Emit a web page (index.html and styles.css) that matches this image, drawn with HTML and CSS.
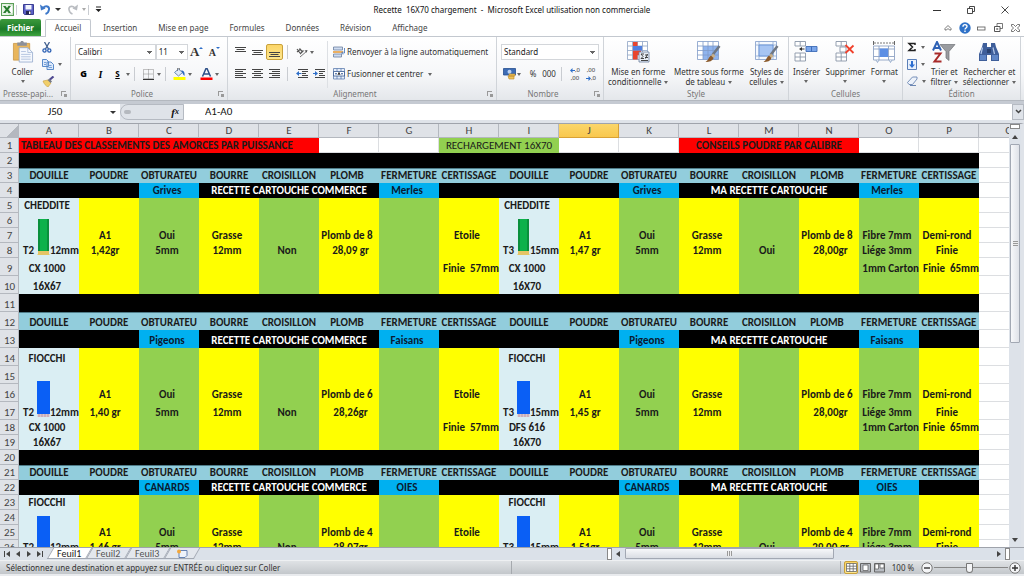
FILE: index.html
```html
<!DOCTYPE html>
<html lang="fr">
<head>
<meta charset="utf-8">
<title>Recette 16X70 chargement - Microsoft Excel</title>
<link rel="stylesheet" href="styles.css">
</head>
<body>
<header class="titlebar">
  <div class="quick">
    <button aria-label="Excel"><svg width="13" height="13" viewBox="0 0 13 13"><rect x=".5" y=".5" width="12" height="12" fill="#e8f3e6" stroke="#5a9e57"/><path d="M8 2h4v9H8z" fill="#fff" stroke="#8fc08c" stroke-width=".6"/><path d="M2 3h2.500L6 5l1.500-2H10L7.300 6.500 10 10H7.500L6 8l-1.500 2H2l2.700-3.500z" fill="#257a2b"/></svg></button>
    <i class="bar"></i>
    <button aria-label="Enregistrer"><svg width="11" height="11" viewBox="0 0 11 11"><path d="M.5.500h10v10h-9l-1-1z" fill="#5a5fc4" stroke="#3c3f94"/><path d="M2.500 1h6v4.500h-6z" fill="#f2f5fc"/><path d="M3 7h5v3.500H3z" fill="#25264f"/><path d="M6 7.500h1.500V10H6z" fill="#fff"/></svg></button>
    <button aria-label="Annuler"><svg width="11" height="11" viewBox="0 0 11 11"><path d="M3 4c3-3 6.500-1.500 6 1.500C8.700 8 7 9.500 5.500 10" fill="none" stroke="#3d78c9" stroke-width="2"/><path d="M0 .5l1 6 4.500-2z" fill="#3d78c9"/></svg><i class="caret dark"></i></button>
    <button aria-label="Rétablir"><svg width="11" height="11" viewBox="0 0 11 11"><path d="M8 4C5 1 1.500 2.500 2 5.500 2.300 8 4 9.500 5.500 10" fill="none" stroke="#b9bcc1" stroke-width="1.600"/><path d="M11 .5l-1 6-4.500-2z" fill="#b9bcc1"/></svg><i class="caret pale"></i></button>
    <i class="bar"></i>
    <button aria-label="Personnaliser"><svg width="7" height="7" viewBox="0 0 7 7"><path d="M1 .5h5v1H1zM.5 3h6l-3 3z" fill="#222"/></svg></button>
  </div>
  <h1>Recette&nbsp; 16X70 chargement&nbsp; -&nbsp; Microsoft Excel utilisation non commerciale</h1>
  <div class="window">
    <button aria-label="Réduire"><svg width="8" height="8" viewBox="0 0 8 8"><path d="M0 4.500h8" stroke="#333"/></svg></button>
    <button aria-label="Restaurer"><svg width="8" height="8" viewBox="0 0 8 8"><path d="M.5 2.500h5v5h-5zM2.500 2.500v-2h5v5h-2" fill="none" stroke="#333" stroke-width=".9"/></svg></button>
    <button aria-label="Fermer"><svg width="8" height="8" viewBox="0 0 8 8"><path d="M.5.500l7 7M7.500.500l-7 7" stroke="#333" stroke-width=".9"/></svg></button>
  </div>
</header>
<nav class="tabs">
  <a class="file" href="#">Fichier</a>
  <a class="active" href="#">Accueil</a>
  <a href="#">Insertion</a>
  <a href="#">Mise en page</a>
  <a href="#">Formules</a>
  <a href="#">Données</a>
  <a href="#">Révision</a>
  <a href="#">Affichage</a>
  <div class="doc">
    <button aria-label="Réduire le ruban"><svg width="8" height="8" viewBox="0 0 8 8"><path d="M4 1.500L7 4.500V6H5.500L4 4.500 2.500 6H1V4.500z" fill="#fff" stroke="#555" stroke-width=".8"/></svg></button>
    <button class="help" aria-label="Aide"><svg width="12" height="12" viewBox="0 0 12 12"><circle cx="6" cy="6" r="5.700" fill="#2f72c8"/><path d="M4 4.700C4 2 8 2 8 4.500 8 6 6 6 6 7.500M6 8.500v1.500" fill="none" stroke="#fff" stroke-width="1.400"/></svg></button>
    <button aria-label="Réduire le classeur"><svg width="9" height="8" viewBox="0 0 9 8"><rect x=".5" y="3" width="7.500" height="3" fill="#fff" stroke="#555" stroke-width=".8"/></svg></button>
    <button aria-label="Restaurer le classeur"><svg width="9" height="9" viewBox="0 0 9 9"><path d="M3 .500h5.500v5H3z" fill="#fff" stroke="#555" stroke-width=".8"/><path d="M.5 3.500H6v5H.5z" fill="#fff" stroke="#555"/><path d="M2.500 5.500h1.500v1H2.500z" fill="none" stroke="#555" stroke-width=".6"/></svg></button>
    <button aria-label="Fermer le classeur"><svg width="9" height="8" viewBox="0 0 9 8"><path d="M.5.500h2l2 2 2-2h2v1.500l-2 2 2 2v1.500h-2l-2-2-2 2h-2V6l2-2-2-2z" fill="#fff" stroke="#555" stroke-width=".8"/></svg></button>
  </div>
</nav>
<section class="ribbon">
  <div class="group">
    <div class="tools">
      <button class="big paste"><svg width="22" height="23" viewBox="0 0 22 23"><path d="M1 2.500h17V20H1z" fill="#e9b65c" stroke="#c28b34" stroke-width=".7"/><path d="M5 1.500h3L9 0h2l1 1.500h3V5H5z" fill="#8d9099"/><path d="M7 7h9l5 5v10H7z" fill="#f5f8fd" stroke="#8ea4c8" stroke-width=".8"/><path d="M16 7v5h5M9 11h5M9 14h10M9 16.500h10M9 19h10" fill="none" stroke="#a3b7d8" stroke-width=".8"/></svg>Coller<i class="caret"></i></button>
      <div class="stack">
        <button aria-label="Couper"><svg width="10" height="11" viewBox="0 0 10 11"><path d="M2.500 0l4 7M7.500 0l-4 7" stroke="#42608f" stroke-width="1.300"/><circle cx="2.500" cy="8.500" r="1.600" fill="none" stroke="#2b5fb3" stroke-width="1.300"/><circle cx="7.300" cy="8.500" r="1.600" fill="none" stroke="#2b5fb3" stroke-width="1.300"/></svg></button>
        <button aria-label="Copier"><svg width="12" height="11" viewBox="0 0 12 11"><path d="M.5.500h4l2 2v5h-6zM5 3h4l2.500 2.500v5H5z" fill="#dce9fb" stroke="#4a7fc4" stroke-width=".9"/><path d="M2 3.500h2M2 5.500h2M6.500 6.500h3M6.500 8.500h3.500" stroke="#5d8fd0" stroke-width=".8"/></svg><i class="caret"></i></button>
        <button aria-label="Reproduire la mise en forme"><svg width="13" height="11" viewBox="0 0 13 11"><path d="M1 5l5-1 3 3-3 4C4 10 2 8 1 5z" fill="#f1cf6a" stroke="#c79e3e" stroke-width=".6"/><path d="M5.500 4l2-1.500 2.500 3L8.500 7z" fill="#777b86"/><path d="M8 3.500L11.500.500" stroke="#4e4890" stroke-width="2.200"/></svg></button>
      </div>
    </div>
    <div class="caption launcher">Presse-papi...<i class="launch"></i></div>
  </div>
  <div class="group">
    <div class="tools rows">
      <div class="row">
        <select class="font" aria-label="Police"><option>Calibri</option></select>
        <select class="size" aria-label="Taille"><option>11</option></select>
        <button class="letter grow" aria-label="Agrandir la police">A<i class="up"></i></button>
        <button class="letter shrink" aria-label="Réduire la police">A<i class="down"></i></button>
      </div>
      <div class="row">
        <button class="t bold">G</button><button class="t ital">I</button><button class="t under">S</button><i class="caret"></i>
        <i class="bar"></i>
        <button class="t" aria-label="Bordures"><svg width="11" height="11" viewBox="0 0 11 11"><path d="M.5.500h10v9H.5zM5.500.500v9M.500 5h10" fill="none" stroke="#888" stroke-dasharray="1 1"/><path d="M0 10.500h11" stroke="#333"/></svg></button><i class="caret"></i>
        <i class="bar"></i>
        <button class="t" aria-label="Remplissage"><svg width="13" height="12" viewBox="0 0 13 12"><path d="M1.500 4.500l4-3.500 4 3.500-4 3.500z" fill="#dfeaf9" stroke="#5e7fae" stroke-width=".9"/><path d="M8 2.500c3 0 4 2 3.500 5.500C10 7 9.500 5 9 4z" fill="#2c69bd"/><path d="M4.500 3V0h2v2" fill="none" stroke="#666" stroke-width=".7"/><path d="M.5 9h12v3H.5z" fill="#ff0"/></svg></button><i class="caret"></i>
        <button class="t last" aria-label="Couleur de police"><svg width="13" height="12" viewBox="0 0 13 12"><path d="M2.500 8.500L6 .500h1l3.500 8M4 6h5" fill="none" stroke="#2c4f87" stroke-width="1.500"/><path d="M.5 9.500h12V12H.5z" fill="#f00"/></svg></button><i class="caret"></i>
      </div>
    </div>
    <div class="caption launcher">Police<i class="launch"></i></div>
  </div>
  <div class="group">
    <div class="tools align">
      <div class="rows">
        <div class="row">
          <button class="t" aria-label="Aligner en haut"><svg width="11" height="12" viewBox="0 0 11 12"><path d="M0 1.500h11M1.500 3.500h8M0 5.500h11" stroke="#444"/></svg></button>
          <button class="t" aria-label="Aligner au centre"><svg width="11" height="12" viewBox="0 0 11 12"><path d="M0 4.500h11M1.500 6.500h8M0 8.500h11" stroke="#444"/></svg></button>
          <button class="t on" aria-label="Aligner en bas"><svg width="11" height="12" viewBox="0 0 11 12"><path d="M0 6.500h11M1.500 8.500h8M0 10.500h11" stroke="#444"/></svg></button>
          <i class="bar"></i>
          <button class="t" aria-label="Orientation"><svg width="12" height="11" viewBox="0 0 12 11"><path d="M1 2l3 4M3.500 1.500l3 3.500M1 5l3-2.500M4 7l3.500-3.500" stroke="#555" stroke-width="1.200"/><path d="M4 10l7-6" stroke="#777"/><path d="M11.500 3l-3 .500 2.200 2.300z" fill="#555"/></svg></button><i class="caret"></i>
        </div>
        <div class="row">
          <button class="t" aria-label="Gauche"><svg width="11" height="10" viewBox="0 0 11 10"><path d="M0 .500h11M0 2.500h8M0 4.500h11M0 6.500h8M0 8.500h11" stroke="#444"/></svg></button>
          <button class="t" aria-label="Centrer"><svg width="11" height="10" viewBox="0 0 11 10"><path d="M0 .500h11M2 2.500h7M0 4.500h11M2 6.500h7M0 8.500h11" stroke="#444"/></svg></button>
          <button class="t" aria-label="Droite"><svg width="11" height="10" viewBox="0 0 11 10"><path d="M0 .500h11M3 2.500h8M0 4.500h11M3 6.500h8M0 8.500h11" stroke="#444"/></svg></button>
          <i class="bar"></i>
          <button class="t" aria-label="Diminuer le retrait"><svg width="12" height="10" viewBox="0 0 12 10"><path d="M2 .500h10M6 2.500h6M6 4.500h4M6 6.500h6M2 8.500h10" stroke="#444"/><path d="M0 4.500L3 2v5z" fill="#2f6fc9"/><path d="M3 4.500h2.500" stroke="#2f6fc9"/></svg></button>
          <button class="t" aria-label="Augmenter le retrait"><svg width="12" height="10" viewBox="0 0 12 10"><path d="M2 .500h10M6 2.500h6M6 4.500h4M6 6.500h6M2 8.500h10" stroke="#444"/><path d="M5 4.500L2 2v5z" fill="#2f6fc9"/><path d="M0 4.500h2.500" stroke="#2f6fc9"/></svg></button>
        </div>
      </div>
      <div class="rows wide">
        <button class="row"><svg width="12" height="12" viewBox="0 0 12 12"><path d="M.5 1h9v3h-9zM.5 8h8v3h-8z" fill="#cfdcf0" stroke="#6a7f9f" stroke-width=".8"/><path d="M0 6h10" stroke="#e6962e" stroke-width="1.500"/><path d="M11.500 2v5H9M10 5.500L8.500 7 10 8.500" fill="none" stroke="#3c6fb8" stroke-width=".8"/></svg>Renvoyer à la ligne automatiquement</button>
        <button class="row"><svg width="12" height="12" viewBox="0 0 12 12"><path d="M.5.500h11v10.500H.5zM4 .500v3M8 .500v3M4 8v3M8 8v3" fill="#e6eefa" stroke="#5f7fb0" stroke-width=".8"/><path d="M.5 3.500h11V8H.5z" fill="#fff" stroke="#35588f" stroke-width=".8"/><path d="M2 5.800h2M8 5.800h2" stroke="#234b8c"/><path d="M5 7l1-2.500L7 7" fill="none" stroke="#111" stroke-width=".9"/></svg>Fusionner et centrer<i class="caret"></i></button>
      </div>
    </div>
    <div class="caption launcher">Alignement<i class="launch"></i></div>
  </div>
  <div class="group">
    <div class="tools rows">
      <div class="row"><select class="format" aria-label="Format de nombre"><option>Standard</option></select></div>
      <div class="row">
        <button class="t" aria-label="Format monétaire"><svg width="13" height="12" viewBox="0 0 13 12"><path d="M.5.500h12v6.500H.5z" fill="#3d6cb5" stroke="#274f8f" stroke-width=".8"/><circle cx="6.500" cy="3.700" r="2" fill="#bcd2f2"/><path d="M6 6h6v2H6zM5 8h6v3H6z" fill="#eec15a" stroke="#b98a28" stroke-width=".6"/></svg></button><i class="caret"></i>
        <button class="t percent">%</button><button class="t">000</button>
        <i class="bar"></i>
        <button class="t dec" aria-label="Ajouter une décimale"><span><svg width="5" height="5" viewBox="0 0 5 5"><path d="M0 2.500L2.500 0v2H5v1H2.500v2z" fill="#2f6fc9"/></svg>,0</span><span>,00</span></button>
        <button class="t dec" aria-label="Réduire les décimales"><span>,00</span><span><svg width="5" height="5" viewBox="0 0 5 5"><path d="M5 2.500L2.500 0v2H0v1h2.500v2z" fill="#2f6fc9"/></svg>,0</span></button>
      </div>
    </div>
    <div class="caption launcher">Nombre<i class="launch"></i></div>
  </div>
  <div class="group">
    <div class="tools spread">
      <button class="big"><svg width="23" height="22" viewBox="0 0 23 22"><path d="M.5.500h20v18H.5zM5.500.500v18M10.500.500v18M15.500.500v18M.500 5h20M.500 9.500h20M.500 14h20" fill="#fff" stroke="#8ea3c4" stroke-width=".8"/><path d="M6 1h4.500v4H6zM6 9.500h8V14H6zM6 14h4.500v4.500H6z" fill="#e8442e"/><path d="M6 5h9v4.500H6z" fill="#4f7fe0"/><path d="M12 11h10v10H12z" fill="#e8edf5" stroke="#6b7f9f" stroke-width=".8"/><path d="M17 13h-3l2 2.500-2 2h3M18 14h3M18 16.500h3M20.500 13l-2 4.500M14 19.500h7" fill="none" stroke="#333" stroke-width=".9"/></svg>Mise en forme<span>conditionnelle<i class="caret"></i></span></button>
      <button class="big"><svg width="24" height="22" viewBox="0 0 24 22"><path d="M.5.500h21v18H.5z" fill="#fff"/><path d="M6 5h15.500v13.500H6z" fill="#8fb4ee"/><path d="M.5.500h21v18H.5zM6 .500v18M11 .500v18M16 .500v18M.500 5h21M.500 9.500h21M.500 14h21" fill="none" stroke="#7f9bc8" stroke-width=".8"/><path d="M22.500 5l-7 9" stroke="#6f7783" stroke-width="2.600"/><path d="M16 12.500l2.500 2.500-2 2-2.500-2z" fill="#c8b089"/><path d="M14 14.500l2.500 2.500c-1 3-4 4-8 4 3-1.500 3-5 5.500-6.500z" fill="#8b5a2b"/></svg>Mettre sous forme<span>de tableau<i class="caret"></i></span></button>
      <button class="big"><svg width="24" height="22" viewBox="0 0 24 22"><path d="M.5.500h21v18H.5z" fill="#f4f8fe" stroke="#7f9bc8" stroke-width=".8"/><path d="M4 .500v18M18 .500v18M.500 4h21M.500 15h21" stroke="#8fa8d0" stroke-width=".8"/><path d="M4 4h14v11H4z" fill="#a7c5f3" stroke="#5e8ad0" stroke-width=".8"/><path d="M22.500 5l-7 9" stroke="#6f7783" stroke-width="2.600"/><path d="M16 12.500l2.500 2.500-2 2-2.500-2z" fill="#c8b089"/><path d="M14 14.500l2.500 2.500c-1 3-4 4-8 4 3-1.500 3-5 5.500-6.500z" fill="#8b5a2b"/></svg>Styles de<span>cellules<i class="caret"></i></span></button>
    </div>
    <div class="caption">Style</div>
  </div>
  <div class="group">
    <div class="tools spread">
      <button class="big"><svg width="24" height="22" viewBox="0 0 24 22"><path d="M1 .500h10.500V5H1zM1 12h10.500v8H1zM6.200.500V5M6.200 12v8M1 16h10.500" fill="#fff" stroke="#8a96a8" stroke-width=".9"/><path d="M12 5.500h11v5H12z" fill="#7ba6ea" stroke="#3e6cb8" stroke-width=".9"/><path d="M17.500 5.500v5" stroke="#3e6cb8"/><path d="M6.500 8h4" stroke="#333"/><path d="M5 8l3-2v4z" fill="#333"/></svg>Insérer<i class="caret"></i></button>
      <button class="big"><svg width="20" height="22" viewBox="0 0 20 22"><path d="M1 .500h10.500V5H1zM1 12h10.500v8H1zM6.200.500V5M6.200 12v8M1 16h10.500M5 6h6v5H5z" fill="#fff" stroke="#8a96a8" stroke-width=".9"/><path d="M10.500 4l8 8M18.500 4.500l-8 7.500" stroke="#f0412c" stroke-width="1.800"/></svg>Supprimer<i class="caret"></i></button>
      <button class="big"><svg width="24" height="22" viewBox="0 0 24 22"><path d="M2 2h20" stroke="#555" stroke-width=".8" stroke-dasharray="2 1"/><path d="M1.500 0v4M22.500 0v4" stroke="#555" stroke-width=".9"/><path d="M1.500 5h21v14H1.500zM7 5v14M16.500 5v14M1.500 8h21M1.500 15.500h21" fill="#fff" stroke="#8ea3c4" stroke-width=".9"/><path d="M7.500 7.500h8.500v8.500H7.500z" fill="#5d8fe4"/><path d="M4 19l1.500 2.500L7 19M17 19l1.500 2.500L20 19" fill="#dde5f2" stroke="#8ea3c4" stroke-width=".8"/></svg>Format<i class="caret"></i></button>
    </div>
    <div class="caption">Cellules</div>
  </div>
  <div class="group">
    <div class="tools spread">
      <div class="stack">
        <button aria-label="Somme"><svg width="10" height="10" viewBox="0 0 10 10"><path d="M8 3V1.500H2L5.500 5 2 8.500h6V7" fill="none" stroke="#222" stroke-width="1.500"/></svg><i class="caret"></i></button>
        <button aria-label="Remplissage"><svg width="10" height="11" viewBox="0 0 10 11"><path d="M.5.500h9v10h-9z" fill="#e9f1fc" stroke="#5a7fb8"/><path d="M4 2h2v3.500h2L5 9 2 5.500h2z" fill="#2d6fd2"/></svg><i class="caret"></i></button>
        <button aria-label="Effacer"><svg width="11" height="10" viewBox="0 0 11 10"><path d="M.5 6.500L5.500 1h4.500v2L5.500 8.500H2z" fill="#edf2fa" stroke="#6b87b3" stroke-width=".9"/><path d="M3 9.500h6" stroke="#6b87b3"/></svg><i class="caret"></i></button>
      </div>
      <button class="big"><svg width="24" height="22" viewBox="0 0 24 22"><path d="M1 9.500L5 1l4 8.500M2.500 7h5" fill="none" stroke="#2f62b5" stroke-width="2"/><path d="M2.500 12.500h6l-6 8h7" fill="none" stroke="#a82a2a" stroke-width="2"/><path d="M8 3.500h15l-6 7v9l-3-2.500v-6.500z" fill="#9a9ca0" stroke="#6f7175" stroke-width=".7"/></svg>Trier et<span>filtrer<i class="caret"></i></span></button>
      <button class="big"><svg width="22" height="22" viewBox="0 0 22 22"><path d="M5 2h4v4h4V2h4l1 4 3 7v7h-8v-6H9v6H1v-7l3-7z" fill="#3f5f9a"/><path d="M2 14h6v5H2zM14 14h6v5h-6z" fill="#5f86c6"/><path d="M4.500 6.500L3 13M15 6.500l1.500 6.500" stroke="#b3c8ea" stroke-width="1.200"/><path d="M9 8h4v4H9z" fill="#2a4270"/></svg>Rechercher et<span>sélectionner<i class="caret"></i></span></button>
    </div>
    <div class="caption">Édition</div>
  </div>
</section>
<section class="formula">
  <label class="name"><input value="J50" aria-label="Zone Nom"><i class="caret dark"></i></label>
  <div class="fx"><i class="knob"></i><button>f<sub>x</sub></button></div>
  <input class="content" value="A1-A0" aria-label="Barre de formule">
  <button class="expand" aria-label="Développer"><svg width="7" height="6" viewBox="0 0 7 6"><path d="M1 1l2.500 2.500L6 1" fill="none" stroke="#444" stroke-width="1.500"/></svg></button>
</section>
<main>
  <div class="sheet">
  <table>
    <colgroup><col class="num"><col span="17"></colgroup>
    <thead><tr><th class="corner"></th><th>A</th><th>B</th><th>C</th><th>D</th><th>E</th><th>F</th><th>G</th><th>H</th><th>I</th><th class="sel">J</th><th>K</th><th>L</th><th>M</th><th>N</th><th>O</th><th>P</th><th>Q</th></tr></thead>
    <tbody>
    <tr><th>1</th><td colspan="5" class="red left">TABLEAU DES CLASSEMENTS DES AMORCES PAR PUISSANCE</td><td></td><td></td><td colspan="2" class="lime">RECHARGEMENT 16X70</td><td></td><td></td><td colspan="3" class="red">CONSEILS POUDRE PAR CALIBRE</td><td></td><td></td><td></td></tr>
    <tr class="void"><th>2</th><td colspan="16"></td><td></td></tr>
    <tr class="head"><th>3</th><td>DOUILLE</td><td>POUDRE</td><td>OBTURATEU</td><td>BOURRE</td><td>CROISILLON</td><td>PLOMB</td><td>FERMETURE</td><td>CERTISSAGE</td><td>DOUILLE</td><td>POUDRE</td><td>OBTURATEU</td><td>BOURRE</td><td>CROISILLON</td><td>PLOMB</td><td>FERMETURE</td><td>CERTISSAGE</td><td></td></tr>
    <tr class="void"><th>4</th><td colspan="2"></td><td class="game">Grives</td><td colspan="3">RECETTE CARTOUCHE COMMERCE</td><td class="game">Merles</td><td colspan="3"></td><td class="game">Grives</td><td colspan="3">MA RECETTE CARTOUCHE</td><td class="game">Merles</td><td></td><td></td></tr>
    <tr class="data"><th>5</th><td>CHEDDITE</td><td></td><td></td><td></td><td></td><td></td><td></td><td></td><td>CHEDDITE</td><td></td><td></td><td></td><td></td><td></td><td></td><td></td><td></td></tr>
    <tr class="data"><th>6</th><td></td><td></td><td></td><td></td><td></td><td></td><td></td><td></td><td></td><td></td><td></td><td></td><td></td><td></td><td></td><td></td><td></td></tr>
    <tr class="data"><th>7</th><td></td><td>A1</td><td>Oui</td><td>Grasse</td><td></td><td>Plomb de 8</td><td></td><td>Etoile</td><td></td><td>A1</td><td>Oui</td><td>Grasse</td><td></td><td>Plomb de 8</td><td>Fibre 7mm</td><td>Demi-rond</td><td></td></tr>
    <tr class="data"><th>8</th><td class="case"><div><span>T2</span><svg class="shell" viewBox="0 0 13 38"><rect x="1" y="1" width="11" height="33" fill="#0db14b"/><path d="M1 1h2v33H1zM10 1h2v33h-2z" fill="#0a8f3c"/><path d="M1 33h11v3l1 1H0l1-1z" fill="#e5c566"/></svg><span>12mm</span></div></td><td>1,42gr</td><td>5mm</td><td>12mm</td><td>Non</td><td class="weight">28,09 gr</td><td></td><td></td><td class="case"><div><span>T3</span><svg class="shell" viewBox="0 0 13 38"><rect x="1" y="1" width="11" height="33" fill="#0db14b"/><path d="M1 1h2v33H1zM10 1h2v33h-2z" fill="#0a8f3c"/><path d="M1 33h11v3l1 1H0l1-1z" fill="#e5c566"/></svg><span>15mm</span></div></td><td>1,47 gr</td><td>5mm</td><td>12mm</td><td>Oui</td><td class="weight">28,00gr</td><td>Liége 3mm</td><td>Finie</td><td></td></tr>
    <tr class="data tall"><th>9</th><td>CX 1000</td><td></td><td></td><td></td><td></td><td></td><td></td><td class="right">Finie&nbsp; 57mm</td><td>CX 1000</td><td></td><td></td><td></td><td></td><td></td><td class="right">1mm Carton</td><td class="right">Finie&nbsp; 65mm</td><td></td></tr>
    <tr class="data tall"><th>10</th><td>16X67</td><td></td><td></td><td></td><td></td><td></td><td></td><td></td><td>16X70</td><td></td><td></td><td></td><td></td><td></td><td></td><td></td><td></td></tr>
    <tr class="void tall"><th>11</th><td colspan="16"></td><td></td></tr>
    <tr class="head tall"><th>12</th><td>DOUILLE</td><td>POUDRE</td><td>OBTURATEU</td><td>BOURRE</td><td>CROISILLON</td><td>PLOMB</td><td>FERMETURE</td><td>CERTISSAGE</td><td>DOUILLE</td><td>POUDRE</td><td>OBTURATEU</td><td>BOURRE</td><td>CROISILLON</td><td>PLOMB</td><td>FERMETURE</td><td>CERTISSAGE</td><td></td></tr>
    <tr class="void tall"><th>13</th><td colspan="2"></td><td class="game">Pigeons</td><td colspan="3">RECETTE CARTOUCHE COMMERCE</td><td class="game">Faisans</td><td colspan="3"></td><td class="game">Pigeons</td><td colspan="3">MA RECETTE CARTOUCHE</td><td class="game">Faisans</td><td></td><td></td></tr>
    <tr class="data tall"><th>14</th><td>FIOCCHI</td><td></td><td></td><td></td><td></td><td></td><td></td><td></td><td>FIOCCHI</td><td></td><td></td><td></td><td></td><td></td><td></td><td></td><td></td></tr>
    <tr class="data tall"><th>15</th><td></td><td></td><td></td><td></td><td></td><td></td><td></td><td></td><td></td><td></td><td></td><td></td><td></td><td></td><td></td><td></td><td></td></tr>
    <tr class="data tall"><th>16</th><td></td><td>A1</td><td>Oui</td><td>Grasse</td><td></td><td>Plomb de 6</td><td></td><td>Etoile</td><td></td><td>A1</td><td>Oui</td><td>Grasse</td><td></td><td>Plomb de 6</td><td>Fibre 7mm</td><td>Demi-rond</td><td></td></tr>
    <tr class="data tall"><th>17</th><td class="case"><div><span>T2</span><svg class="shell" viewBox="0 0 13 38"><path d="M0 1h13v33H0z" fill="#0a5ff5"/><path d="M.5 34h12v3H.5z" fill="#dcc6cf"/><path d="M2 34v3M5 34v3M8 34v3M11 34v3" stroke="#b08d98" stroke-width=".7"/></svg><span>12mm</span></div></td><td>1,40 gr</td><td>5mm</td><td>12mm</td><td>Non</td><td class="weight">28,26gr</td><td></td><td></td><td class="case"><div><span>T3</span><svg class="shell" viewBox="0 0 13 38"><path d="M0 1h13v33H0z" fill="#0a5ff5"/><path d="M.5 34h12v3H.5z" fill="#dcc6cf"/><path d="M2 34v3M5 34v3M8 34v3M11 34v3" stroke="#b08d98" stroke-width=".7"/></svg><span>15mm</span></div></td><td>1,45 gr</td><td>5mm</td><td>12mm</td><td></td><td class="weight">28,00gr</td><td>Liége 3mm</td><td>Finie</td><td></td></tr>
    <tr class="data"><th>18</th><td>CX 1000</td><td></td><td></td><td></td><td></td><td></td><td></td><td class="right">Finie&nbsp; 57mm</td><td>DFS 616</td><td></td><td></td><td></td><td></td><td></td><td class="right">1mm Carton</td><td class="right">Finie&nbsp; 65mm</td><td></td></tr>
    <tr class="data"><th>19</th><td>16X67</td><td></td><td></td><td></td><td></td><td></td><td></td><td></td><td>16X70</td><td></td><td></td><td></td><td></td><td></td><td></td><td></td><td></td></tr>
    <tr class="void"><th>20</th><td colspan="16"></td><td></td></tr>
    <tr class="head"><th>21</th><td>DOUILLE</td><td>POUDRE</td><td>OBTURATEU</td><td>BOURRE</td><td>CROISILLON</td><td>PLOMB</td><td>FERMETURE</td><td>CERTISSAGE</td><td>DOUILLE</td><td>POUDRE</td><td>OBTURATEU</td><td>BOURRE</td><td>CROISILLON</td><td>PLOMB</td><td>FERMETURE</td><td>CERTISSAGE</td><td></td></tr>
    <tr class="void"><th>22</th><td colspan="2"></td><td class="game">CANARDS</td><td colspan="3">RECETTE CARTOUCHE COMMERCE</td><td class="game">OIES</td><td colspan="3"></td><td class="game">CANARDS</td><td colspan="3">MA RECETTE CARTOUCHE</td><td class="game">OIES</td><td></td><td></td></tr>
    <tr class="data"><th>23</th><td>FIOCCHI</td><td></td><td></td><td></td><td></td><td></td><td></td><td></td><td>FIOCCHI</td><td></td><td></td><td></td><td></td><td></td><td></td><td></td><td></td></tr>
    <tr class="data"><th>24</th><td></td><td></td><td></td><td></td><td></td><td></td><td></td><td></td><td></td><td></td><td></td><td></td><td></td><td></td><td></td><td></td><td></td></tr>
    <tr class="data"><th>25</th><td></td><td>A1</td><td>Oui</td><td>Grasse</td><td></td><td>Plomb de 4</td><td></td><td>Etoile</td><td></td><td>A1</td><td>Oui</td><td>Grasse</td><td></td><td>Plomb de 4</td><td>Fibre 7mm</td><td>Demi-rond</td><td></td></tr>
    <tr class="data"><th>26</th><td class="case"><div><span>T2</span><svg class="shell" viewBox="0 0 13 38"><path d="M0 1h13v33H0z" fill="#0a5ff5"/><path d="M.5 34h12v3H.5z" fill="#dcc6cf"/></svg><span>12mm</span></div></td><td>1,46 gr</td><td>5mm</td><td>12mm</td><td>Non</td><td class="weight">28,07gr</td><td></td><td></td><td class="case"><div><span>T3</span><svg class="shell" viewBox="0 0 13 38"><path d="M0 1h13v33H0z" fill="#0a5ff5"/><path d="M.5 34h12v3H.5z" fill="#dcc6cf"/></svg><span>15mm</span></div></td><td>1,51gr</td><td>5mm</td><td>12mm</td><td>Oui</td><td class="weight">29,00 gr</td><td>Liége 3mm</td><td>Finie</td><td></td></tr>
    </tbody>
  </table>
  </div>
  <div class="vscroll">
    <i class="split"></i>
    <button aria-label="Défiler vers le haut"><i class="arrow-up"></i></button>
    <div class="thumb"><i class="grip"></i></div>
    <div class="track"></div>
    <button aria-label="Défiler vers le bas"><i class="arrow-down"></i></button>
  </div>
</main>
<footer class="sheets">
  <div class="list">
    <div class="arrows">
      <button aria-label="Première feuille"><svg width="8" height="8" viewBox="0 0 8 8"><path d="M1 1h1v6H1zM7 1v6L3 4z"/></svg></button>
      <button aria-label="Feuille précédente"><svg width="8" height="8" viewBox="0 0 8 8"><path d="M6 1v6L2 4z"/></svg></button>
      <button aria-label="Feuille suivante"><svg width="8" height="8" viewBox="0 0 8 8"><path d="M2 1v6l4-3z"/></svg></button>
      <button aria-label="Dernière feuille"><svg width="8" height="8" viewBox="0 0 8 8"><path d="M6 1h1v6H6zM1 1v6l4-3z"/></svg></button>
    </div>
    <button class="tab current"><span>Feuil1</span></button><button class="tab"><span>Feuil2</span></button><button class="tab"><span>Feuil3</span></button><button class="tab new" aria-label="Insérer une feuille"><span><svg width="12" height="9" viewBox="0 0 12 9"><path d="M3 1.500h8v5l-2 2H3z" fill="#eef3fb" stroke="#5877ab" stroke-width=".9"/><circle cx="3" cy="2.500" r="2" fill="#f3a73b"/></svg></span></button>
  </div>
  <i class="split"></i>
  <div class="hscroll">
    <button aria-label="Défiler à gauche"><i class="arrow-left"></i></button>
    <div class="thumb"><i class="grip"></i></div>
    <div class="track"></div>
    <button aria-label="Défiler à droite"><i class="arrow-right"></i></button>
  </div>
  <i class="split last"></i>
</footer>
<footer class="status">
  <span class="message">Sélectionnez une destination et appuyez sur ENTRÉE ou cliquez sur Coller</span>
  <div class="middle"></div>
  <div class="view">
    <button class="on" aria-label="Normal"><svg width="11" height="10" viewBox="0 0 11 10"><path d="M.5.500h10v8H.5zM3.800.500v8M7.200.500v8M.500 3.200h10M.500 5.800h10" fill="#fff" stroke="#666" stroke-width=".8"/></svg></button>
    <button aria-label="Mise en page"><svg width="11" height="10" viewBox="0 0 11 10"><path d="M.5.500h10v8.500H.5z" fill="#b8bcc2" stroke="#666"/><path d="M3 2h5v5.500H3z" fill="#fff" stroke="#666" stroke-width=".8"/></svg></button>
    <button aria-label="Aperçu des sauts de page"><svg width="11" height="10" viewBox="0 0 11 10"><path d="M.5.500h10v8.500H.5z" fill="#b8bcc2" stroke="#666"/><path d="M1 1h3.500v5H1zM6 1h4v4H6z" fill="#fff" stroke="#666" stroke-width=".8"/></svg></button>
    <output>100 %</output>
    <button class="round" aria-label="Zoom arrière"><svg width="12" height="12" viewBox="0 0 12 12"><circle cx="6" cy="6" r="5.200" fill="#f4f5f7" stroke="#777"/><path d="M3 6h6" stroke="#333" stroke-width="1.400"/></svg></button>
    <input type="range" min="0" max="100" value="48" aria-label="Zoom">
    <button class="round" aria-label="Zoom avant"><svg width="12" height="12" viewBox="0 0 12 12"><circle cx="6" cy="6" r="5.200" fill="#f4f5f7" stroke="#777"/><path d="M3 6h6M6 3v6" stroke="#333" stroke-width="1.400"/></svg></button>
  </div>
</footer>
</body>
</html>
```
FILE: styles.css
```css
* { box-sizing: border-box; }
html, body { height: 100%; margin: 0; }
body {
  display: flex;
  flex-direction: column;
  overflow: hidden;
  background: #fff;
  color: #333;
  font: 8px/10px "Noto Sans", "Open Sans", sans-serif;
}
button, input, select { font: inherit; color: inherit; border: 0; margin: 0; padding: 0; background: none; border-radius: 0; outline: 0; }
button { display: flex; align-items: center; justify-content: center; white-space: nowrap; }
svg { display: block; flex: none; }
i { display: block; flex: none; }
a { color: inherit; text-decoration: none; }

.caret { width: 0; height: 0; border: 2px solid transparent; border-top: 3px solid #666; border-bottom: 0; }
.caret.dark { border-width: 3px; border-bottom: 0; border-top-color: #333; }
.caret.pale { border-top-color: #aaa; }
.bar { width: 1px; height: 10px; background: #c9ccd1; }

/* Title bar and tabs */
.titlebar { display: grid; grid-template-columns: 1fr auto 1fr; align-items: center; height: 19px; flex: none; }
.titlebar h1 { margin: 0; font-size: 8px; font-weight: 400; color: #111; }
.quick { display: flex; align-items: center; gap: 6px; padding-left: 1px; }
.quick .bar { margin-left: -4px; }
.quick button { gap: 4px; }
.window { display: flex; justify-content: flex-end; padding-right: 2px; }
.window button { width: 34px; height: 16px; }
.tabs { display: flex; flex: none; height: 18px; border-bottom: 1px solid #c3c8cf; line-height: 17px; color: #444; }
.tabs a { padding: 0 11px 0 10px; margin-bottom: -1px; }
.tabs .file { background: linear-gradient(#3d9a3d, #1b7a27 60%, #3ea33f); color: #fff; font-weight: 700; padding: 0 7px; margin: 0 4px 0 0; border-radius: 2px 2px 0 0; }
.tabs .active { background: #fff; border: 1px solid #c3c8cf; border-bottom: 0; border-radius: 2px 2px 0 0; padding: 0 9px; line-height: 16px; margin-right: 2px; }
.doc { display: flex; margin-left: auto; align-items: center; }
.doc button { width: 17px; height: 16px; }

/* Ribbon */
.ribbon { display: grid; grid-template-columns: 71fr 157fr 269fr 107fr 185fr 114fr 118fr; flex: none; height: 64px; padding-right: 3px; background: linear-gradient(#fff, #f6f7f9 60%, #e4e7eb); border-bottom: 1px solid #b3b8bf; }
.group { display: flex; flex-direction: column; border-right: 1px solid #d0d4d9; min-width: 0; }
.tools { flex: 1; display: flex; padding: 4px 4px 0; min-height: 0; }
.caption { position: relative; height: 12px; color: #777; line-height: 12px; text-align: center; }
.launcher { padding-right: 14px; }
.launch { position: absolute; right: 4px; top: 3px; width: 5px; height: 5px; border: 1px solid #999; border-right: 0; border-bottom: 0; }
.launch::after { content: ""; position: absolute; left: 2px; top: 2px; width: 3px; height: 3px; background: #999; }
.big { flex-direction: column; justify-content: flex-start; line-height: 10px; }
.big svg { margin-bottom: 4px; height: 22px; }
.big > .caret { margin-top: 3px; }
.big span { display: flex; align-items: center; gap: 3px; }
.paste { width: 37px; }
.stack { display: flex; flex-direction: column; align-items: flex-start; gap: 5px; }
.stack button { height: 12px; gap: 4px; }
.paste + .stack { margin-left: 1px; }
.spread { justify-content: space-between; }
.rows { display: flex; flex-direction: column; gap: 6px; }
.tools.rows { padding-top: 7px; }
.row { display: flex; align-items: center; height: 16px; }
.t { width: 17px; height: 16px; }
.t.last { margin-left: 6px; }
.t.percent { margin-left: 4px; }
.t.on, .view .on { background: linear-gradient(#fbd567, #fde68f); border: 1px solid #c9a13b; border-radius: 2px; }
.row .bar { margin: 0 5px 0 4px; height: 14px; }
.tools select {
  appearance: none; height: 16px; border: 1px solid #d3d6da; padding: 0 2px; color: #222;
  background:
    linear-gradient(#666, #666) right 3px top 6px / 5px 1px no-repeat,
    linear-gradient(#666, #666) right 4px top 7px / 3px 1px no-repeat,
    linear-gradient(#666, #666) right 5px top 8px / 1px 1px no-repeat,
    #fff;
}
.tools .font { width: 83px; }
.tools .size { width: 33px; }
.tools .format { width: 99px; }
.letter { width: 18px; height: 16px; font: bold 13px "Liberation Serif", serif; }
.letter.shrink { font-size: 10px; }
.up, .down { border: 2px solid transparent; height: 0; align-self: flex-start; margin-top: 3px; }
.up { border-bottom-color: #2f6fc9; border-top: 0; }
.down { border-top-color: #2f6fc9; border-bottom: 0; }
.bold { font-weight: 900; color: #000; font-size: 9px; }
.ital { font: italic bold 10px "Liberation Serif", serif; color: #000; }
.under { text-decoration: underline; font-weight: 700; color: #000; }
.align > .rows { padding-top: 3px; }
.align .wide { margin-left: auto; border-left: 1px solid #dde0e4; padding-left: 5px; width: 166px; align-items: flex-start; }
.wide .row { gap: 2px; }
.wide .caret { margin-left: 3px; }
.dec { flex-direction: column; line-height: 8px; font-size: 6px; }
.dec span { display: flex; align-items: center; }

/* Formula bar */
.formula { display: flex; flex: none; height: 22px; background: #dfe3e9; border-top: 3px solid #c5cad2; border-bottom: 3px solid #dfe3e9; color: #111; }
.formula input { font: 11px/14px Carlito, Lato, sans-serif; }
.name { display: flex; align-items: center; flex: none; width: 120px; background: #fff; padding-right: 4px; }
.name input { flex: 1; min-width: 0; text-align: center; }
.fx { display: flex; align-items: center; justify-content: space-between; flex: none; width: 64px; padding-right: 4px; border-radius: 8px 0 0 8px; border: 1px solid #b5bac2; }
.fx button { font: italic bold 11px/12px "Liberation Serif", serif; }
.fx sub { font-size: 8px; }
.knob { width: 7px; height: 4px; margin-left: 3px; border-radius: 2px; background: #b5b9bf; }
.content { flex: 1; min-width: 0; background: #fff; padding-left: 21px; }
.expand { width: 12px; border: 1px solid #b5bac2; }

/* Worksheet */
main { flex: 1; display: flex; min-height: 0; border-right: 3px solid #dfe3e9; border-top: 1px solid #9fa3ab; }
.sheet { flex: 1; min-width: 0; overflow: hidden; background: #fff; }
table { table-layout: fixed; width: 1039px; border-collapse: separate; border-spacing: 0; font: bold 11px/15px Carlito, Lato, sans-serif; color: #1a1a1a; }
col { width: 60px; }
col.num { width: 19px; }
th, td { padding: 0; overflow: hidden; white-space: nowrap; text-align: center; vertical-align: bottom; }
td { height: 15px; box-shadow: inset -1px -1px #dcdee1; }
th { font-weight: 400; color: #444; background: #dfe2e7; box-shadow: inset -1px -1px #b4b8bf; }
thead th { height: 14px; line-height: 14px; }
thead .sel { background: linear-gradient(#fbd66a, #f9c74c); box-shadow: inset -1px -1px #d9a236; }
.corner { background: linear-gradient(135deg, #dfe2e7 60%, #b4b8bf 60%); }
.tall td { height: 18px; }
.red { background: #f00; box-shadow: none; }
.lime { background: #92d050; box-shadow: none; font-weight: 400; }
.left { text-align: left; padding-left: 2px; }
.void td { background: #000; color: #fff; box-shadow: none; }
.void td.game { background: #00b0f0; color: #0a1a30; padding-right: 4px; }
.head td { background: #92cddc; box-shadow: inset 0 1px #4f7c88; }
.head td:nth-child(7), .head td:nth-child(15) { padding-right: 4px; }
.data td { padding-right: 4px; box-shadow: none; background: #92d050; }
.data td:nth-child(odd) { background: #ff0; }
.data td:nth-child(2), .data td:nth-child(10) { background: #daeef3; }
.data td:nth-child(3), .data td:nth-child(11) { padding-right: 8px; }
.data td.weight { padding: 0 0 0 3px; }
.data td.right { text-align: right; padding: 0; }
.data td:last-child, .void td:last-child, .head td:last-child { background: #fff; box-shadow: inset -1px -1px #dcdee1; }
.data td.case { padding: 0 0 0 4px; overflow: visible; }
.case div { position: relative; display: flex; justify-content: space-between; }
.shell { position: absolute; left: 14px; bottom: 2px; width: 13px; height: 38px; }

/* Scroll bars */
.vscroll { display: flex; flex-direction: column; align-items: center; flex: none; width: 12px; background: #dde2e9; }
.vscroll button { width: 12px; height: 15px; }
.vscroll .split { width: 10px; height: 5px; border: 1px solid #888; background: #fff; }
.vscroll .thumb { flex: 199; width: 10px; }
.vscroll .track { flex: 191; }
.thumb { display: flex; align-items: center; justify-content: center; background: linear-gradient(90deg, #f7f8fa, #dfe2e8); border: 1px solid #a2a8b3; border-radius: 1px; }
.grip { width: 5px; height: 5px; background: repeating-linear-gradient(#999 0 1px, #eee 1px 2px); }
.arrow-up, .arrow-down, .arrow-left, .arrow-right { width: 0; height: 0; border: 3px solid transparent; }
.arrow-up { border-bottom: 4px solid #444; border-top: 0; }
.arrow-down { border-top: 4px solid #444; border-bottom: 0; }
.arrow-left { border-right: 4px solid #444; border-left: 0; }
.arrow-right { border-left: 4px solid #444; border-right: 0; }

/* Sheet tabs */
.sheets { display: flex; flex: none; height: 13px; background: #dbe1e9; border-top: 1px solid #9fa3ab; padding-right: 14px; }
.list { display: flex; flex: 606; min-width: 0; }
.arrows { display: flex; align-items: center; gap: 3px; padding: 0 6px 0 3px; fill: #444; }
.tab { width: 39px; height: 11px; transform: skewX(-30deg); background: #e3e7ed; border: 1px solid #a2a8b3; border-top: 0; font: 10px/11px Carlito, Lato, sans-serif; color: #555; }
.tab span { display: block; transform: skewX(30deg); }
.tab.current { background: #fff; color: #222; }
.tab.new { width: 30px; }
.sheets .split { width: 5px; border: 1px solid #888; background: #fff; }
.hscroll { display: flex; flex: 393; padding-bottom: 1px; }
.hscroll button { width: 13px; }
.hscroll .thumb { flex: 207; background: linear-gradient(#f7f8fa, #d9dde3); }
.hscroll .track { flex: 158; }
.hscroll .grip { background: repeating-linear-gradient(90deg, #999 0 1px, #eee 1px 2px); }

/* Status bar */
.status { display: flex; flex: none; align-items: center; height: 16px; border-top: 1px solid #eef0f2; border-bottom: 2px solid #e9ebee; background: linear-gradient(#dfe2e5, #c3c7cb); color: #333; }
.message { flex: 505; padding-left: 6px; }
.middle { flex: 328; align-self: stretch; border-left: 1px solid #a5a9ae; border-right: 1px solid #a5a9ae; }
.view { display: flex; align-items: center; flex: none; padding: 0 2px 0 3px; }
.view button { width: 14px; height: 13px; }
.view output { width: 34px; text-align: center; }
.view input { appearance: none; width: 74px; height: 12px; background: linear-gradient(#888, #888) no-repeat center / 100% 1px; }
.view input::-webkit-slider-thumb { appearance: none; width: 7px; height: 10px; background: #f4f5f7; border: 1px solid #777; border-radius: 1px 1px 4px 4px; }
```
